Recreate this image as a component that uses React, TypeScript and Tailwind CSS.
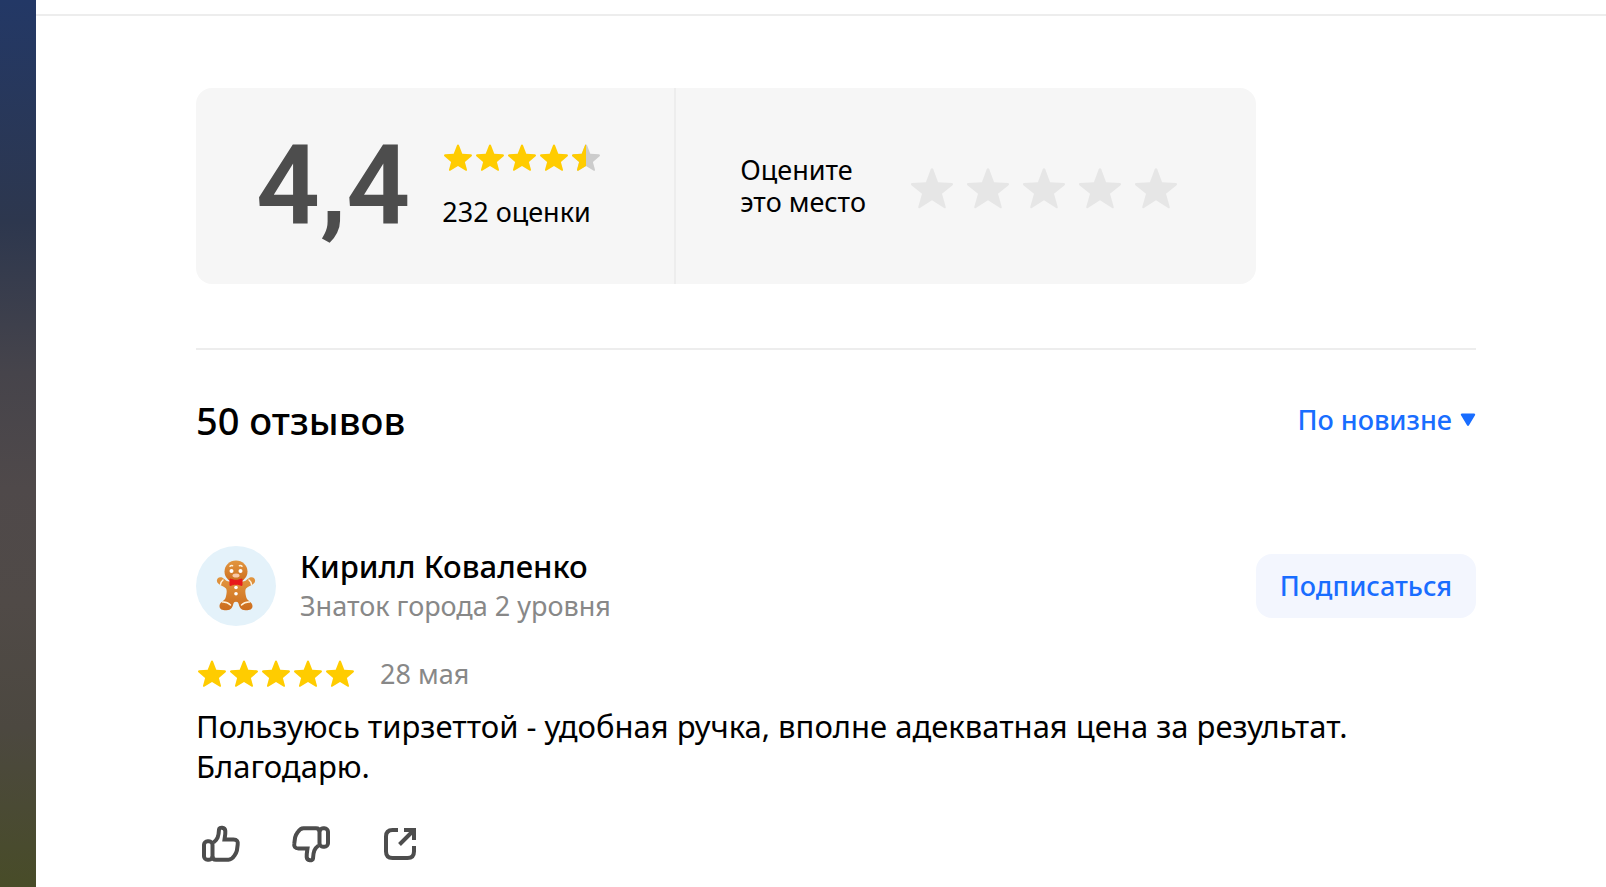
import React, { useState } from 'react';

const STAR_PATH =
  'M16 2.6c.5 0 .9.3 1.1.8l3.2 8.3 8.5.5c1.1.1 1.6 1.4.8 2.1l-6.7 5.6 2.1 7.9c.2.9-.5 1.3-1.2.9L16 23.9l-7.8 4.8c-.7.4-1.4 0-1.2-.9l2.1-7.9-6.7-5.6c-.8-.7-.3-2 .8-2.1l8.5-.5 3.2-8.3c.2-.5.6-.8 1.1-.8z';

const RATE_STAR_PATH =
  'M21 1.2c.6 0 1 .4 1.2.9l4.9 13.2 13.7.7c1.2.1 1.7 1.4.8 2.2L31 26.8l3.7 13c.3 1.1-.7 1.7-1.6 1.1L21 33.2 8.9 40.9c-.9.6-1.9 0-1.6-1.1l3.7-13L.4 18.2c-.9-.8-.4-2.1.8-2.2l13.7-.7 4.9-13.2c.2-.5.6-.9 1.2-.9z';

const Stars = ({ value }: { value: number }) => (
  <div className="flex" role="img" aria-label={`Оценка ${value} из 5`}>
    {[1, 2, 3, 4, 5].map((n) => (
      <svg key={n} viewBox="0 0 32 32" className="size-8">
        <path d={STAR_PATH} fill={value >= n ? '#ffcc00' : '#cccccc'} />
        {value < n && value > n - 1 && (
          <>
            <clipPath id={`half-${n}`}>
              <rect width="16" height="32" />
            </clipPath>
            <path d={STAR_PATH} fill="#ffcc00" clipPath={`url(#half-${n})`} />
          </>
        )}
      </svg>
    ))}
  </div>
);

const RatingCard = () => {
  const [rate, setRate] = useState(0);

  return (
    <section className="flex h-49 w-fit rounded-2xl bg-[#f6f6f6]">
      <div className="flex items-center gap-8 border-r-2 border-[#ededed] pl-15 pr-18">
        <div className="font-[Roboto,sans-serif] text-[112px] leading-none font-semibold text-[#4d4d4d]">4,4</div>
        <div className="flex flex-col gap-5">
          <Stars value={4.5} />
          <div className="text-[27px] leading-9">232 оценки</div>
        </div>
      </div>
      <div className="flex items-center gap-[38px] pl-16 pr-18">
        <p className="text-[27px] leading-8">
          Оцените
          <br />
          это место
        </p>
        <div className="flex pt-1">
          {[1, 2, 3, 4, 5].map((n) => (
            <button
              key={n}
              type="button"
              aria-label={`Оценить на ${n}`}
              onClick={() => setRate(n)}
              className="flex h-14 w-14 items-center justify-center"
            >
              <svg viewBox="0 0 42 42" className="size-[42px]">
                <path d={RATE_STAR_PATH} fill={rate >= n ? '#ffcc00' : '#e6e6e6'} />
              </svg>
            </button>
          ))}
        </div>
      </div>
    </section>
  );
};

const Gingerbread = () => (
  <svg viewBox="0 0 80 80" className="size-20 shrink-0" aria-hidden="true">
    <defs>
      <linearGradient id="cookie" x1="0" y1="0" x2="0" y2="1">
        <stop offset="0" stopColor="#e2963f" />
        <stop offset="1" stopColor="#cc6d1e" />
      </linearGradient>
    </defs>
    <circle cx="40" cy="40" r="40" fill="#e4f2fa" />
    <g fill="url(#cookie)">
      <path d="M33 35.5c-3 0-4.500-3-7.500-4.200-3.500-1-5.800 2.500-4 5.400 2 2.800 6.500 3.500 8.500 5.800 1.300 2 .5 6-.5 9.500-1 3-6 4-6 8 0 3.500 3 4.400 7 4.300 5-.1 6-3.300 6.800-6.300.5-1.500 1-2.200 2.700-2.200s2.200.7 2.700 2.200c.8 3 1.800 6.200 6.800 6.300 4 .1 7-.8 7-4.300 0-4-5-5-6-8-1-3.500-1.800-7.500-.5-9.500 2-2.300 6.500-3 8.500-5.800 1.800-2.900-.5-6.400-4-5.400-3 1.200-4.500 4.200-7.500 4.200z" />
      <ellipse cx="40" cy="25.5" rx="11.5" ry="11" />
    </g>
    <g fill="none" stroke="#fff3dc" strokeWidth="1.5" strokeLinecap="round">
      <path d="M24.5 38.5c.2-1.800 1-3.300 2.500-4.500M55.500 38.500c-.2-1.800-1-3.300-2.500-4.500M26.500 56c3-.2 6 1 8 3M53.500 56c-3-.2-6 1-8 3" />
      <path d="M34 20.3c.7-.8 1.700-1 2.600-.6M46 20.300c-.7-.8-1.700-1-2.600-.6" />
    </g>
    <g fill="#fff">
      <circle cx="35.5" cy="25" r="2" />
      <circle cx="44.5" cy="25" r="2" />
      <circle cx="40" cy="41.5" r="1.8" />
      <circle cx="40" cy="47.8" r="1.8" />
    </g>
    <ellipse cx="40" cy="29.5" rx="3.5" ry="2" fill="#f9c9a8" />
    <path d="M34 33l4.5 1.300h3L46 33v6.500l-4.500-1.200h-3L34 39.500z" fill="#e8191c" stroke="#e8191c" strokeLinejoin="round" />
  </svg>
);

const ThumbUp = () => (
  <>
    <rect x="8" y="21.3" width="8.5" height="18.4" rx="3.5" />
    <path d="M17.5 22.500c4-3 5.200-6 5.500-13 .2-2.700 6-2.500 6.300 1.500.2 3-.3 5-.8 8.500h9c3.500 0 4.700 2 4.200 5l-.8 6c-.5 2-1.200 3.500-2.400 5-1.800 2.800-3 4.200-6 4.200H20c-2.500 0-3.500-1.300-3.500-3.500" />
  </>
);

const ReviewCard = () => (
  <article>
    <header className="flex items-center gap-6">
      <Gingerbread />
      <div className="flex-1">
        <h3 className="text-[31px] leading-10 font-medium">Кирилл Коваленко</h3>
        <p className="text-[27px] leading-10 text-[#888888]">Знаток города 2 уровня</p>
      </div>
      <button
        type="button"
        className="h-16 rounded-2xl bg-[#f3f6fe] px-6 text-[27px] font-medium text-[#196dff]"
      >
        Подписаться
      </button>
    </header>
    <div className="mt-7 flex items-center gap-6">
      <Stars value={5} />
      <time className="text-[27px] leading-10 text-[#888888]">28 мая</time>
    </div>
    <p className="mt-3 text-[31px] leading-10">
      Пользуюсь тирзеттой - удобная ручка, вполне адекватная цена за результат. Благодарю.
    </p>
    <footer className="mt-[34px] flex gap-[42px] text-[#4d4d4d]">
      <button type="button" aria-label="Нравится">
        <svg viewBox="0 0 48 48" className="size-12" fill="none" stroke="currentColor" strokeWidth="4">
          <ThumbUp />
        </svg>
      </button>
      <button type="button" aria-label="Не нравится">
        <svg viewBox="0 0 48 48" className="size-12" fill="none" stroke="currentColor" strokeWidth="4">
          <g transform="rotate(180 25 24)">
            <ThumbUp />
          </g>
        </svg>
      </button>
      <button type="button" aria-label="Поделиться">
        <svg viewBox="0 0 48 48" className="size-12" fill="none" stroke="currentColor" strokeWidth="4">
          <path d="M22 10h-5.5C12 10 10 12 10 16.500v15c0 4.500 2 6.500 6.500 6.500h15c4.500 0 6.500-2 6.500-6.500V26M28 10h10v10M37 11L23.500 24.500" />
        </svg>
      </button>
    </footer>
  </article>
);

export default function App() {
  return (
    <div className="flex min-h-screen bg-white font-['Noto_Sans',sans-serif] text-black">
      <div className="w-9 shrink-0 bg-[linear-gradient(#233866,#2d374e_25%,#46444b_42%,#4f494a_55%,#504a47_68%,#4c4840_82%,#484c28)]" />
      <main className="flex-1">
        <div className="mt-3.5 border-t-2 border-[#ededed]" />
        <div className="ml-40 mr-8 max-w-7xl pt-18">
          <RatingCard />
          <div className="mt-16 border-t-2 border-[#ededed]" />
          <div className="mt-11 mb-25 flex items-center justify-between">
            <h2 className="text-[38px] leading-13 font-medium">50 отзывов</h2>
            <button type="button" className="flex items-center gap-2 text-[27px] font-medium text-[#196dff]">
              По новизне
              <svg viewBox="0 0 16 14" className="h-3.5 w-4" fill="currentColor">
                <path d="M2 .5h12c1 0 1.5 1 1 1.800l-6 10c-.5.900-1.500.900-2 0l-6-10C.5 1.500 1 .5 2 .5z" />
              </svg>
            </button>
          </div>
          <ReviewCard />
        </div>
      </main>
    </div>
  );
}
